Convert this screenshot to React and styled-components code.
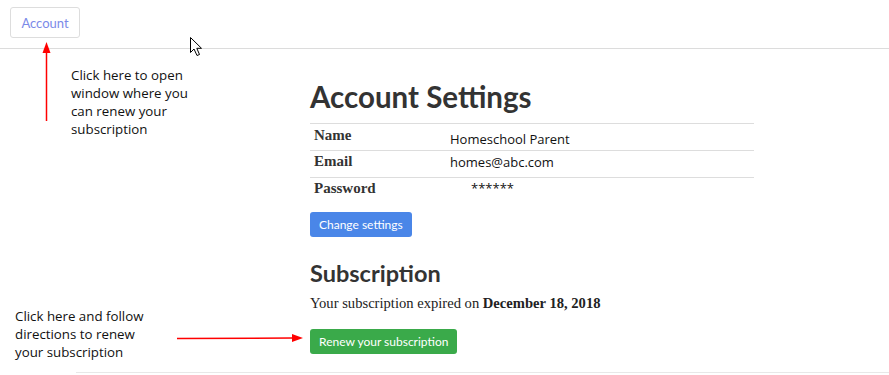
import React from "react";
import styled, { createGlobalStyle } from "styled-components";

const Global = createGlobalStyle`
  html, body { margin: 0; padding: 0; background: #fff; }
  body { font-family: "Open Sans", sans-serif; color: #333; }
`;

const Page = styled.div`
  position: relative;
  width: 889px;
  height: 375px;
  overflow: hidden;
`;

const NavBar = styled.header`
  height: 49px;
  box-sizing: border-box;
  border-bottom: 1px solid #dcdcdc;
  padding: 7px 10px 0;
  display: flex;
  align-items: flex-start;
`;

const NavButton = styled.button`
  width: 70px;
  height: 31px;
  border: 1px solid #ddd;
  border-radius: 3px;
  background: #fff;
  color: #7b8ae8;
  font-family: Lato, sans-serif;
  font-size: 13px;
  padding: 0;
`;

const Main = styled.main`
  width: 444px;
  margin-left: 310px;
  padding-top: 30px;
`;

const H1 = styled.h1`
  margin: 0 0 8px;
  font-family: Lato, sans-serif;
  font-weight: 700;
  font-size: 29.5px;
  line-height: 36px;
  color: #333;
`;

const H2 = styled.h2`
  margin: 22px 0 6px;
  font-family: Lato, sans-serif;
  font-weight: 700;
  font-size: 23.5px;
  line-height: 28px;
  color: #333;
`;

const Table = styled.div`
  border-top: 1px solid #ddd;
`;

const Row = styled.div`
  display: grid;
  grid-template-columns: 140px 1fr;
  height: ${(p) => p.$h || 26}px;
  border-bottom: ${(p) => (p.$last ? "none" : "1px solid #ddd")};
`;

const Label = styled.div`
  padding-left: 4px;
  padding-top: ${(p) => p.$pt || 3}px;
  font-family: "Liberation Serif", serif;
  font-weight: 700;
  font-size: 15px;
  color: #333;
`;

const Value = styled.div`
  padding-top: ${(p) => p.$pt || 3}px;
  padding-left: ${(p) => p.$pl || 0}px;
  font-family: "Open Sans", sans-serif;
  font-size: 13px;
  color: #111;
`;

const Button = styled.button`
  display: block;
  height: 25px;
  padding: 0 9px;
  border: none;
  border-radius: 3px;
  background: ${(p) => (p.$green ? "#3aaa4a" : "#4a86e8")};
  color: #fff;
  font-family: Lato, sans-serif;
  font-size: 12px;
  margin-top: ${(p) => p.$mt || 0}px;
`;

const Text = styled.p`
  margin: 0;
  font-family: "Liberation Serif", serif;
  font-size: 14.6px;
  line-height: 20px;
  color: #222;
  b { font-weight: 700; }
`;

const Note = styled.div`
  position: absolute;
  left: ${(p) => p.$x}px;
  top: ${(p) => p.$y}px;
  font-family: "Open Sans", sans-serif;
  font-size: 13.3px;
  line-height: 18px;
  color: #111;
`;

const Overlay = styled.svg`
  position: absolute;
  left: 0;
  top: 0;
  pointer-events: none;
`;

const BottomRule = styled.div`
  position: absolute;
  left: 76px;
  right: 0;
  top: 372px;
  border-top: 1px solid #e8e8e8;
`;

export default function App() {
  return (
    <Page>
      <Global />
      <NavBar>
        <NavButton>Account</NavButton>
      </NavBar>
      <Main>
        <H1>Account Settings</H1>
        <Table>
          <Row>
            <Label>Name</Label>
            <Value $pt={6}>Homeschool Parent</Value>
          </Row>
          <Row>
            <Label $pt={2}>Email</Label>
            <Value $pt={2}>homes@abc.com</Value>
          </Row>
          <Row $last $h={34}>
            <Label $pt={2}>Password</Label>
            <Value $pt={1} $pl={21}>******</Value>
          </Row>
        </Table>
        <Button>Change settings</Button>
        <H2>Subscription</H2>
        <Text>
          Your subscription expired on <b>December 18, 2018</b>
        </Text>
        <Button $green $mt={16}>Renew your subscription</Button>
      </Main>
      <BottomRule />
      <Note $x={71} $y={66}>
        Click here to open
        <br />
        window where you
        <br />
        can renew your
        <br />
        subscription
      </Note>
      <Note $x={15} $y={307}>
        Click here and follow
        <br />
        directions to renew
        <br />
        your subscription
      </Note>
      <Overlay width="889" height="375" viewBox="0 0 889 375">
        <line x1="46.5" y1="121" x2="46.5" y2="52" stroke="#f00" strokeWidth="1.5" />
        <polygon points="46.5,42 42.5,53 50.5,53" fill="#f00" />
        <line x1="177" y1="338.5" x2="294" y2="338" stroke="#f00" strokeWidth="1.5" />
        <polygon points="303,338 292,334 292,342" fill="#f00" />
        <path
          d="M190.5 37.5 L190.5 52.5 L194 49 L197 55.5 L199.5 54.5 L196.8 48.3 L201.5 48.3 Z"
          fill="#fff"
          stroke="#000"
          strokeWidth="1"
          strokeLinejoin="miter"
        />
      </Overlay>
    </Page>
  );
}
